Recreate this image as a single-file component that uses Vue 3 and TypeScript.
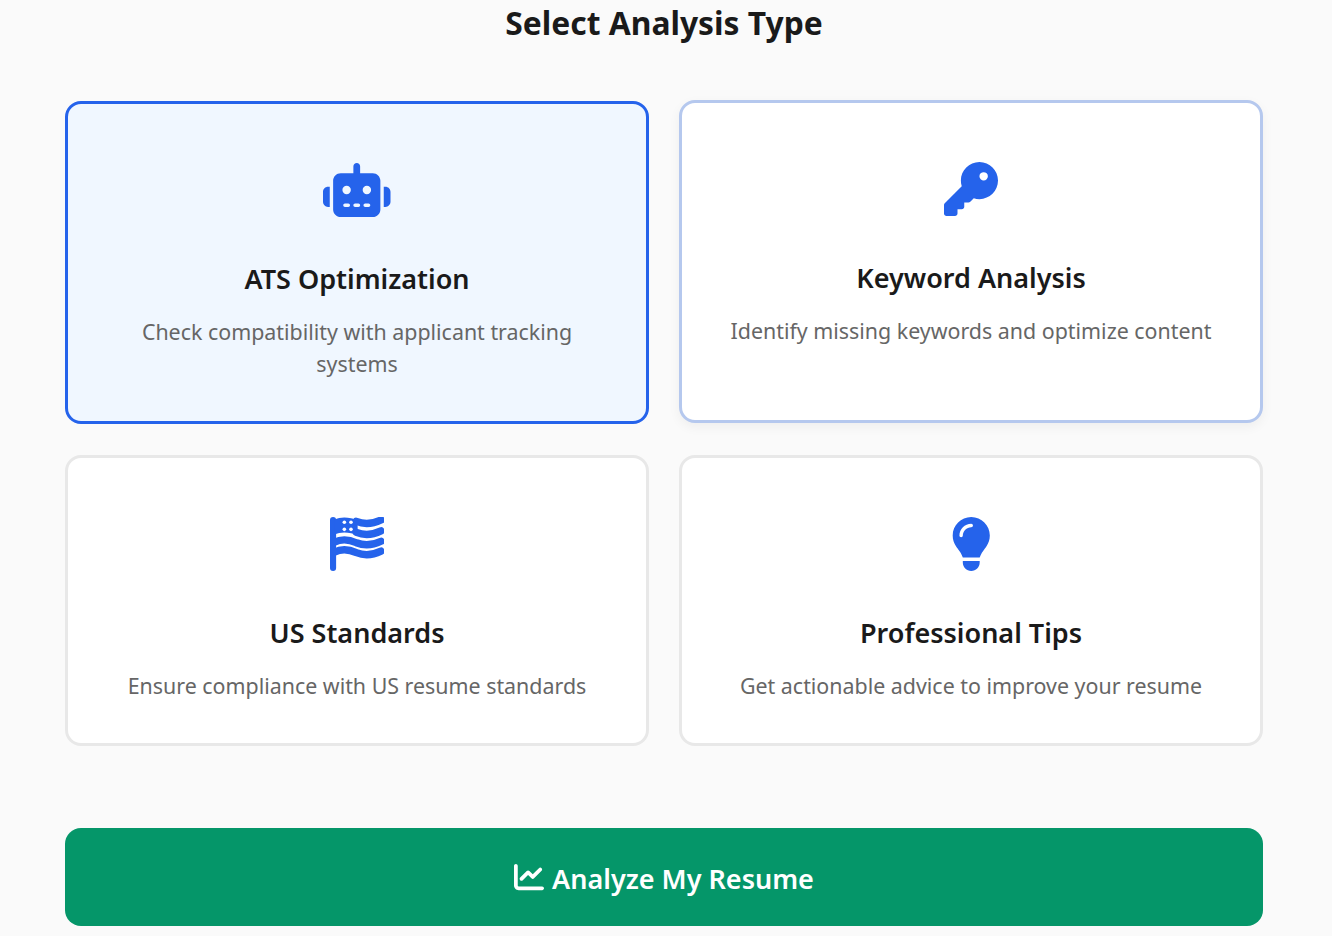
<template>
  <div class="page">
    <h2 class="heading">Select Analysis Type</h2>

    <div class="grid">
      <div
        v-for="opt in options"
        :key="opt.title"
        class="card"
        :class="{ active: opt.id === selected, hover: opt.id === hovered }"
      >
        <div class="icon">
          <svg v-if="opt.id === 'ats'" class="glyph" viewBox="0 0 640 512" width="67.5" height="54">
            <path d="M320 0c17.7 0 32 14.3 32 32V96H472c39.8 0 72 32.2 72 72V440c0 39.8-32.2 72-72 72H168c-39.8 0-72-32.2-72-72V168c0-39.8 32.2-72 72-72H288V32c0-17.7 14.3-32 32-32zM208 384c-8.8 0-16 7.2-16 16s7.2 16 16 16h32c8.8 0 16-7.2 16-16s-7.2-16-16-16H208zm96 0c-8.8 0-16 7.2-16 16s7.2 16 16 16h32c8.8 0 16-7.2 16-16s-7.2-16-16-16H304zm96 0c-8.8 0-16 7.2-16 16s7.2 16 16 16h32c8.8 0 16-7.2 16-16s-7.2-16-16-16H400zM264 256a40 40 0 1 0 -80 0 40 40 0 1 0 80 0zm152 40a40 40 0 1 0 0-80 40 40 0 1 0 0 80zM48 224H64V416H48c-26.5 0-48-21.5-48-48V272c0-26.5 21.5-48 48-48zm544 0c26.5 0 48 21.5 48 48v96c0 26.5-21.5 48-48 48H576V224h16z" />
          </svg>
          <svg v-else-if="opt.id === 'keyword'" class="glyph" viewBox="0 0 512 512" width="54" height="54">
            <path d="M336 352c97.2 0 176-78.8 176-176S433.2 0 336 0S160 78.8 160 176c0 18.7 2.9 36.8 8.3 53.7L7 391c-4.5 4.5-7 10.6-7 17v80c0 13.3 10.7 24 24 24h80c13.3 0 24-10.7 24-24V448h40c13.3 0 24-10.7 24-24V384h40c6.4 0 12.5-2.5 17-7l33.3-33.3c16.9 5.4 35 8.3 53.7 8.3zM376 96a40 40 0 1 1 0 80 40 40 0 1 1 0-80z" />
          </svg>
          <svg v-else-if="opt.id === 'us'" class="glyph" viewBox="0 0 512 512" width="54" height="54">
            <rect x="0" y="0" width="58" height="512" rx="29" />
            <path d="M40 26C110 -8 190 4 262 30V172C190 146 110 134 40 168Z" />
            <g class="wave">
              <path d="M250 42C330 74 400 68 484 28" />
              <path d="M250 146C330 178 400 172 484 132" />
              <path d="M40 240C110 204 180 212 250 244C330 276 400 270 484 230" />
              <path d="M40 334C110 298 180 306 250 338C330 370 400 364 484 324" />
            </g>
            <g class="stars">
              <circle cx="136" cy="50" r="17" />
              <circle cx="199" cy="50" r="17" />
              <circle cx="136" cy="117" r="17" />
              <circle cx="199" cy="117" r="17" />
            </g>
          </svg>
          <svg v-else class="glyph" viewBox="0 0 384 512" width="40.5" height="54">
            <path d="M272 384c9.6-31.9 29.5-59.1 49.2-86.2l0 0c5.2-7.1 10.4-14.2 15.4-21.4c19.8-28.5 31.4-63 31.4-100.3C368 78.8 289.2 0 192 0S16 78.8 16 176c0 37.3 11.6 71.9 31.4 100.3c5 7.2 10.2 14.3 15.4 21.4l0 0c19.8 27.1 39.7 54.4 49.2 86.2H272zM192 512c44.2 0 80-35.8 80-80V416H112v16c0 44.2 35.8 80 80 80zM112 176c0 8.8-7.2 16-16 16s-16-7.2-16-16c0-61.9 50.1-112 112-112c8.8 0 16 7.2 16 16s-7.2 16-16 16c-44.2 0-80 35.8-80 80z" />
          </svg>
        </div>
        <h3 class="title">{{ opt.title }}</h3>
        <p class="desc">{{ opt.desc }}</p>
      </div>
    </div>

    <button class="analyze" type="button">
      <svg viewBox="0 0 512 512" width="30" height="30">
        <path d="M64 64c0-17.7-14.3-32-32-32S0 46.3 0 64V400c0 44.2 35.8 80 80 80H480c17.7 0 32-14.3 32-32s-14.3-32-32-32H80c-8.8 0-16-7.2-16-16V64zm406.6 86.6c12.5-12.5 12.5-32.8 0-45.3s-32.8-12.5-45.3 0L320 210.7l-57.4-57.4c-12.5-12.5-32.8-12.5-45.3 0l-112 112c-12.5 12.5-12.5 32.8 0 45.3s32.8 12.5 45.3 0L240 221.3l57.4 57.4c12.5 12.5 32.8 12.5 45.3 0l128-128z" />
      </svg>
      <span class="label">Analyze My Resume</span>
    </button>
  </div>
</template>

<script setup lang="ts">
const selected = 'ats'
const hovered = 'keyword'

const options = [
  { id: 'ats', title: 'ATS Optimization', desc: 'Check compatibility with applicant tracking systems' },
  { id: 'keyword', title: 'Keyword Analysis', desc: 'Identify missing keywords and optimize content' },
  { id: 'us', title: 'US Standards', desc: 'Ensure compliance with US resume standards' },
  { id: 'tips', title: 'Professional Tips', desc: 'Get actionable advice to improve your resume' },
]
</script>

<style scoped>
.page {
  height: 936px;
  overflow: hidden;
  box-sizing: border-box;
  padding: 0 69px 0 65px;
  background-color: #fafafa;
  font-family: "Noto Sans", sans-serif;
}

.heading {
  margin: 0 0 55px;
  height: 46px;
  line-height: 46px;
  font-size: 31.8px;
  font-weight: 700;
  color: #1a1a1a;
  text-align: center;
}

.grid {
  display: grid;
  grid-template-columns: 1fr 1fr;
  grid-template-rows: auto 291.2px;
  column-gap: 30px;
  row-gap: 30.8px;
}

.card {
  padding: 59px 32px 40px;
  border: 3px solid #e8e8e8;
  border-radius: 16px;
  background-color: #fff;
  text-align: center;
}

.card.active {
  border-color: #2563eb;
  background-color: #f0f7ff;
}

.card.hover {
  border-color: #b5c8ee;
  transform: translateY(-1px);
  box-shadow: 0 4px 12px rgba(0, 0, 0, 0.05);
}

.icon {
  height: 62px;
  margin-bottom: 34px;
}

.glyph {
  display: inline-block;
  fill: #2563eb;
}

.wave {
  fill: none;
  stroke: #2563eb;
  stroke-width: 70;
  stroke-linecap: round;
}

.stars {
  fill: #fff;
}

.title {
  margin: 0 0 17px;
  font-size: 27px;
  font-weight: 600;
  line-height: 40px;
  color: #1a1a1a;
}

.desc {
  margin: 0;
  font-size: 21.4px;
  line-height: 32.4px;
  color: #666;
}

.analyze {
  display: flex;
  align-items: center;
  justify-content: center;
  gap: 8px;
  width: 100%;
  height: 98px;
  margin-top: 82px;
  border: none;
  border-radius: 16px;
  background-color: #059669;
  color: #fff;
  font-family: inherit;
  font-size: 27px;
  font-weight: 600;
}

.analyze svg {
  fill: #fff;
}

.label {
  padding-top: 4px;
}
</style>
